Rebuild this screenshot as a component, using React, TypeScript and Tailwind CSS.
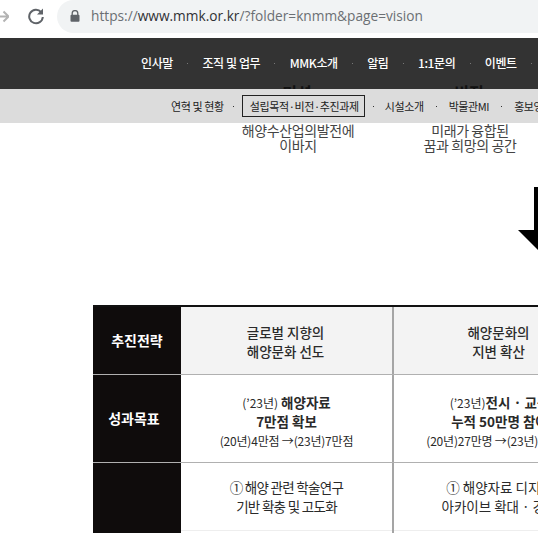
// App.tsx
const KR = "font-['Noto_Sans_CJK_KR','Noto_Sans',sans-serif]";

const mainMenu = ['인사말', '조직 및 업무', 'MMK소개', '알림', '1:1문의', '이벤트'];

const Dot = ({ className }: { className: string }) => (
  <span className={`h-[1px] w-[1px] shrink-0 ${className}`} />
);

const BrowserBar = () => (
  <div className="flex h-[38px] items-start bg-white">
    <svg width="16" height="34" viewBox="0 0 16 34" className="ml-[-7px] mt-0 shrink-0">
      <path d="M7 16.5h8M10.5 11.5l5 5-5 5" fill="none" stroke="#b3b3b3" strokeWidth="2" />
    </svg>
    <svg width="18" height="18" viewBox="0 0 18 18" className="ml-[18px] mt-[7px] shrink-0">
      <path d="M14.2 5.1A6.8 6.8 0 1 0 15.8 10" fill="none" stroke="#5f6368" strokeWidth="2" />
      <path d="M16 1.6v6h-6z" fill="#5f6368" />
    </svg>
    <div className="ml-[12px] flex h-[33px] w-[520px] shrink-0 items-center rounded-l-[17px] bg-[#f1f3f4] pl-[13px]">
      <svg width="10" height="12" viewBox="0 0 10 12" className="mb-[1px] shrink-0">
        <path d="M2.2 5V3.4a2.8 2.8 0 0 1 5.6 0V5" fill="none" stroke="#5f6368" strokeWidth="1.3" />
        <rect x="0.5" y="4.8" width="9" height="7" rx="1" fill="#5f6368" />
      </svg>
      <span className="ml-[11px] whitespace-nowrap font-['Open_Sans',sans-serif] text-[13.7px] text-[#6b6f73]">
        https://<span className="text-[#303134]">www.mmk.or.kr</span>/?folder=knmm&amp;page=vision
      </span>
    </div>
  </div>
);

const Header = () => (
  <div className="flex h-[51px] flex-col bg-[#333333]">
    <div className="flex h-[46px] shrink-0 items-center pl-[141px] pt-[4px]">
      {mainMenu.map((item, i) => (
        <div key={item} className="flex shrink-0 items-center">
          {i > 0 && (
            <div className="flex w-[29.5px] justify-center">
              <Dot className="bg-[#777777]" />
            </div>
          )}
          <span className="whitespace-nowrap text-[12px] font-medium tracking-[-0.4px] text-white">{item}</span>
        </div>
      ))}
      <div className="flex w-[29px] shrink-0 justify-center">
        <Dot className="bg-[#777777]" />
      </div>
    </div>
    {/* 헤더 아래로 비치는 제목 */}
    <div className="flex h-[5px] overflow-hidden pl-[211px] text-[16px] font-bold leading-[16px] text-[#111111]">
      <div className="w-[172px] shrink-0 text-center">미션</div>
      <div className="w-[172px] shrink-0 text-center">비전</div>
    </div>
  </div>
);

const SubNav = () => (
  <div className="flex h-[34px] items-center bg-[#dcdcdc] pl-[171px] text-[11px] tracking-[-0.4px] text-[#222222]">
    <span className="shrink-0 whitespace-nowrap">연혁 및 현황</span>
    <Dot className="ml-[9px] mr-[8px] bg-[#333333]" />
    <span className="shrink-0 whitespace-nowrap border border-[#222222] py-[2px] pl-[7px] pr-[5px] leading-[16px] [word-spacing:-2px]">
      설립목적 · 비전 · 추진과제
    </span>
    <Dot className="ml-[8px] mr-[11px] bg-[#333333]" />
    <span className="shrink-0 whitespace-nowrap">시설소개</span>
    <Dot className="mx-[12px] bg-[#333333]" />
    <span className="shrink-0 whitespace-nowrap">박물관MI</span>
    <Dot className="mx-[12px] bg-[#333333]" />
    <span className="shrink-0 whitespace-nowrap">홍보영상</span>
  </div>
);

const Cell = ({ children, className = '' }: { children: React.ReactNode; className?: string }) => (
  <div className={`flex flex-col items-center border-r-2 border-[#a5a5a5] text-center whitespace-nowrap ${className}`}>
    {children}
  </div>
);

const Label = ({ children, className = '' }: { children?: React.ReactNode; className?: string }) => (
  <div className={`flex items-center justify-center bg-[#0f0c0c] text-[14px] font-bold text-white ${className}`}>
    {children}
  </div>
);

const StrategyTable = () => (
  <div className="ml-[93px] grid w-[514px] grid-cols-[88px_213px_213px] grid-rows-[67px_87px_71px] gap-y-[1px] border-t-2 border-[#111111] bg-[#b0b0b0] text-[13.5px] leading-[19px] text-[#2a2a2a]">
    <Label>추진전략</Label>
    <Cell className="justify-center bg-[#f3f3f3] pr-[2px] pt-[2px] font-medium">
      <div>글로벌 지향의</div>
      <div>해양문화 선도</div>
    </Cell>
    <Cell className="justify-center bg-[#f3f3f3] pr-[2px] pt-[2px] font-medium">
      <div>해양문화의</div>
      <div>지변 확산</div>
    </Cell>

    <Label className="pr-[6px]">성과목표</Label>
    <Cell className="justify-center bg-white pt-[5px]">
      <div>
        <span className="text-[12px]">(’23년)</span> <span className="font-bold">해양자료</span>
      </div>
      <div className="font-bold">7만점 확보</div>
      <div className="text-[12px] tracking-[-0.2px]">(20년)4만점 →(23년)7만점</div>
    </Cell>
    <Cell className="justify-center bg-white pt-[5px]">
      <div>
        <span className="text-[12px]">(’23년)</span>
        <span className="font-bold">전시 · 교육</span>
      </div>
      <div className="font-bold">누적 50만명 참여</div>
      <div className="text-[12px] tracking-[-0.2px]">(20년)27만명 →(23년)50만명</div>
    </Cell>

    <Label />
    <Cell className="bg-white">
      <div className="h-[68px] w-full border-b border-[#eeeeee] pt-[15px] leading-[18.5px]">
        <div className="tracking-[-0.7px]">① 해양 관련 학술연구</div>
        <div className="tracking-[-0.7px]">기반 확충 및 고도화</div>
      </div>
    </Cell>
    <Cell className="bg-white">
      <div className="h-[68px] w-full border-b border-[#eeeeee] pt-[15px] leading-[18.5px]">
        <div>① 해양자료 디지털</div>
        <div>아카이브 확대 · 강화</div>
      </div>
    </Cell>
  </div>
);

export default function App() {
  return (
    <div className={`h-[533px] w-[538px] overflow-hidden bg-white ${KR}`}>
      <BrowserBar />
      <Header />
      <SubNav />

      <div className="flex h-[31px] pl-[212px] text-[14px] leading-[15px] tracking-[-0.4px] text-[#444444]">
        <div className="w-[172px] shrink-0 text-center">
          <div>해양수산업의발전에</div>
          <div>이바지</div>
        </div>
        <div className="w-[172px] shrink-0 text-center">
          <div>미래가 융합된</div>
          <div>꿈과 희망의 공간</div>
        </div>
      </div>

      <div className="flex pl-[518px] pt-[33px]">
        <svg width="40" height="63" viewBox="0 0 40 63" className="shrink-0">
          <path d="M16 0h8v43h16L20 63 0 43h16z" fill="#000000" />
        </svg>
      </div>

      <div className="pt-[55px]">
        <StrategyTable />
      </div>
    </div>
  );
}
